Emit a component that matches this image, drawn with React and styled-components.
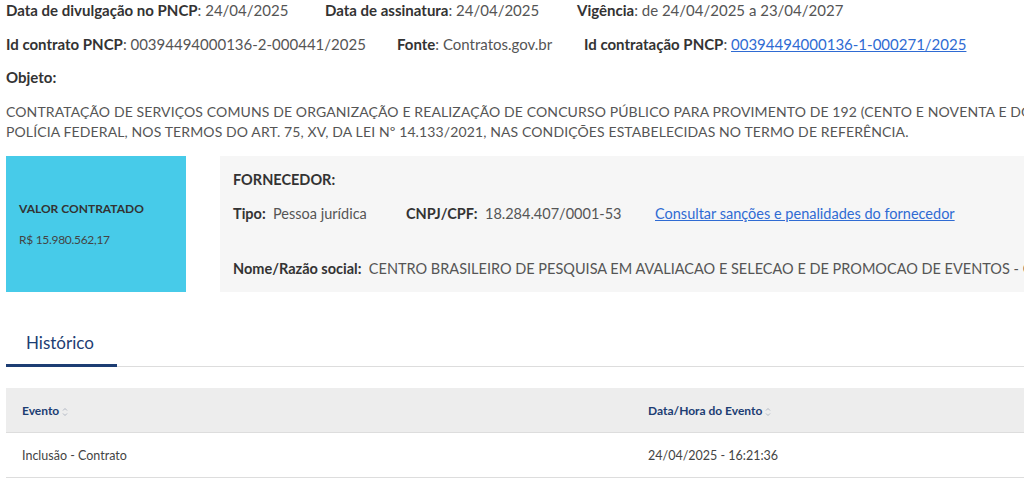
import React from "react";
import styled, { createGlobalStyle } from "styled-components";

const GlobalStyle = createGlobalStyle`
  html, body {
    margin: 0;
    padding: 0;
    background: #fff;
    overflow: hidden;
  }
  body {
    font-family: Lato, "Open Sans", sans-serif;
    color: #333;
  }
`;

const Page = styled.div`
  width: 1400px;
  padding: 0 0 0 6px;
`;

const InfoRow = styled.div`
  display: flex;
  margin-top: ${(p) => p.top || 0}px;
  font-size: 15px;
  line-height: 20px;
  white-space: nowrap;
`;

const Field = styled.span`
  color: #555;
  flex-shrink: 0;
  width: ${(p) => (p.width ? `${p.width}px` : "auto")};
`;

const Label = styled.b`
  color: #333;
  font-weight: 700;
`;

const Link = styled.a`
  color: #2f6bd3;
  text-decoration: underline;
`;

const Heading = styled.div`
  margin-top: 13px;
  font-size: 15px;
  line-height: 20px;
  font-weight: 700;
`;

const Description = styled.p`
  margin: 15px 0 0;
  font-size: 14px;
  line-height: 20px;
  letter-spacing: 0.12px;
  color: #555;
  white-space: nowrap;
`;

const Summary = styled.div`
  display: flex;
  gap: 34px;
  margin-top: 14px;
  height: 136px;
`;

const ValueCard = styled.div`
  width: 180px;
  flex-shrink: 0;
  background: #47cbe9;
  display: flex;
  flex-direction: column;
  justify-content: center;
  padding: 0 13px;
  box-sizing: border-box;
`;

const ValueTitle = styled.div`
  font-size: 12px;
  font-weight: 700;
  color: #333;
  line-height: 16px;
`;

const ValueAmount = styled.div`
  margin-top: 15px;
  font-size: 12px;
  color: #444;
  line-height: 16px;
  letter-spacing: -0.3px;
`;

const Supplier = styled.div`
  flex: 1;
  background: #f6f6f6;
  padding: 14px 13px 0;
  font-size: 14.5px;
  line-height: 20px;
  white-space: nowrap;
`;

const SupplierRow = styled.div`
  display: flex;
  margin-top: ${(p) => p.top || 0}px;
`;

const Tabs = styled.div`
  margin-top: 39px;
  border-bottom: 1px solid #ddd;
  display: flex;
`;

const Tab = styled.div`
  width: 111px;
  box-sizing: border-box;
  padding: 0 0 9px 20px;
  font-size: 17px;
  line-height: 24px;
  color: #1c3d73;
  border-bottom: 3px solid #1c3d73;
  margin-bottom: -1px;
`;

const Table = styled.div`
  margin-top: 21px;
  font-size: 12px;
`;

const HeadRow = styled.div`
  display: grid;
  grid-template-columns: 626px 1fr;
  background: #ededed;
  height: 44px;
  align-items: center;
  border-bottom: 1px solid #ddd;
  padding-left: 16px;
  font-weight: 700;
  color: #1c3d73;
`;

const BodyRow = styled.div`
  display: grid;
  grid-template-columns: 626px 1fr;
  height: 44px;
  align-items: center;
  border-bottom: 1px solid #ddd;
  padding-left: 16px;
  font-size: 12.5px;
  color: #444;
`;

const HeadCell = styled.div`
  display: flex;
  align-items: center;
  gap: 3px;
`;

const SortIcon = () => (
  <svg width="6" height="10" viewBox="0 0 6 10" style={{ marginTop: 3 }}>
    <path d="M1 3.5 L3 1.5 L5 3.5" fill="none" stroke="#a9b1be" strokeWidth="0.9" />
    <path d="M1 6.5 L3 8.5 L5 6.5" fill="none" stroke="#a9b1be" strokeWidth="0.9" />
  </svg>
);

export default function App() {
  return (
    <>
      <GlobalStyle />
      <Page>
        <InfoRow>
          <Field width={319}><Label>Data de divulgação no PNCP</Label>: 24/04/2025</Field>
          <Field width={252}><Label>Data de assinatura</Label>: 24/04/2025</Field>
          <Field><Label>Vigência</Label>: de 24/04/2025 a 23/04/2027</Field>
        </InfoRow>
        <InfoRow top={14}>
          <Field width={391}><Label>Id contrato PNCP</Label>: 00394494000136-2-000441/2025</Field>
          <Field width={187}><Label>Fonte</Label>: Contratos.gov.br</Field>
          <Field><Label>Id contratação PNCP</Label>: <Link>00394494000136-1-000271/2025</Link></Field>
        </InfoRow>
        <Heading>Objeto:</Heading>
        <Description>
          CONTRATAÇÃO DE SERVIÇOS COMUNS DE ORGANIZAÇÃO E REALIZAÇÃO DE CONCURSO PÚBLICO PARA PROVIMENTO DE 192 (CENTO E NOVENTA E DOIS) CARGOS DA
          <br />
          POLÍCIA FEDERAL, NOS TERMOS DO ART. 75, XV, DA LEI Nº 14.133/2021, NAS CONDIÇÕES ESTABELECIDAS NO TERMO DE REFERÊNCIA.
        </Description>
        <Summary>
          <ValueCard>
            <ValueTitle>VALOR CONTRATADO</ValueTitle>
            <ValueAmount>R$ 15.980.562,17</ValueAmount>
          </ValueCard>
          <Supplier>
            <Label>FORNECEDOR:</Label>
            <SupplierRow top={14}>
              <Field width={173}><Label>Tipo:</Label>&nbsp; Pessoa jurídica</Field>
              <Field width={249}><Label>CNPJ/CPF:</Label>&nbsp; 18.284.407/0001-53</Field>
              <Field><Link>Consultar sanções e penalidades do fornecedor</Link></Field>
            </SupplierRow>
            <SupplierRow top={35}>
              <Field><Label>Nome/Razão social:</Label>&nbsp; CENTRO BRASILEIRO DE PESQUISA EM AVALIACAO E SELECAO E DE PROMOCAO DE EVENTOS - CEBRASPE</Field>
            </SupplierRow>
          </Supplier>
        </Summary>
        <Tabs>
          <Tab>Histórico</Tab>
        </Tabs>
        <Table>
          <HeadRow>
            <HeadCell>Evento <SortIcon /></HeadCell>
            <HeadCell>Data/Hora do Evento <SortIcon /></HeadCell>
          </HeadRow>
          <BodyRow>
            <div>Inclusão - Contrato</div>
            <div>24/04/2025 - 16:21:36</div>
          </BodyRow>
        </Table>
      </Page>
    </>
  );
}
